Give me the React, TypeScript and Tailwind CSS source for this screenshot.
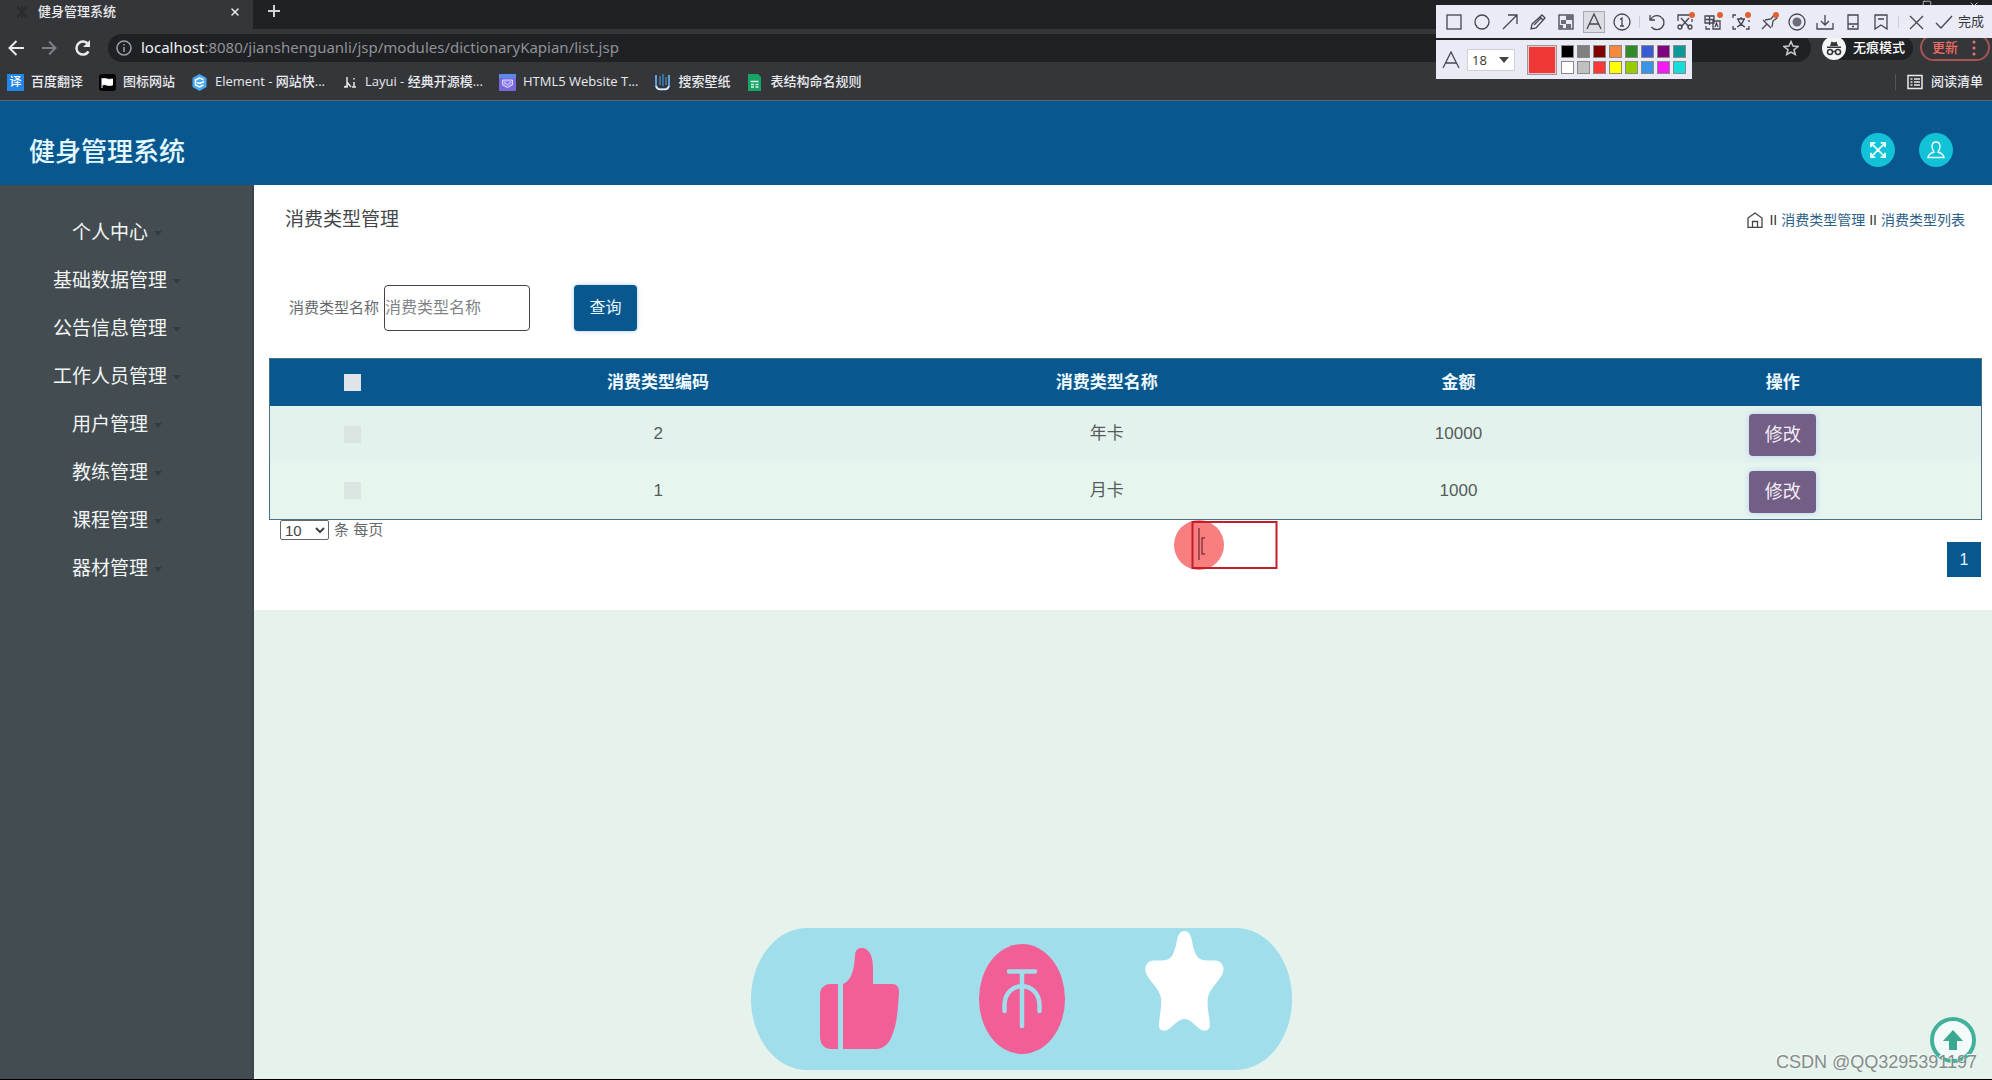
import type { ReactNode } from 'react'
import { Minus, Square, X } from 'lucide-react'

interface Bookmark {
  label: string
  icon: ReactNode
}

interface CardType {
  code: number
  name: string
  amount: number
}

const bookmarks: Bookmark[] = [
  {
    label: '百度翻译',
    icon: (
      <span className="flex h-[17px] w-[17px] items-center justify-center bg-[#2285e8] text-xs text-white">译</span>
    ),
  },
  {
    label: '图标网站',
    icon: (
      <svg viewBox="0 0 17 17" className="h-[17px] w-[17px]">
        <rect width="17" height="17" rx="3" fill="#050505" />
        <path d="M3 4v10M3.500 5c3-1.500 5 1.500 10 0v6c-5 1.500-7-1.500-10 0z" fill="#fff" stroke="#fff" />
      </svg>
    ),
  },
  {
    label: 'Element - 网站快...',
    icon: (
      <svg viewBox="0 0 17 17" className="h-[17px] w-[17px]">
        <path d="M8.500 0l7 4v9l-7 4-7-4V4z" fill="#45a9f5" />
        <path d="M12.500 5.500L8.500 4 4.500 6v5l4 2 4-2M6 8.500l3 1 4-2" fill="none" stroke="#fff" strokeWidth="1.500" />
      </svg>
    ),
  },
  {
    label: 'Layui - 经典开源模...',
    icon: (
      <svg viewBox="0 0 17 17" className="h-[17px] w-[17px]">
        <path d="M6 3v9l-3 1M6 8l4 5M3 13h4M13 4v1.500M13 8v5M11 13h4" fill="none" stroke="#e4e4e4" strokeWidth="1.500" />
      </svg>
    ),
  },
  {
    label: 'HTML5 Website T...',
    icon: (
      <svg viewBox="0 0 17 17" className="h-[17px] w-[17px]">
        <rect width="17" height="17" rx="1" fill="#7769dc" />
        <rect width="17" height="4" fill="#5b8ae8" />
        <path d="M3.500 6h10v5l-5 2.500-5-2.500zM5 8l3.500 2.500L12 8" fill="#9c8df0" stroke="#ddd8ff" />
      </svg>
    ),
  },
  {
    label: '搜索壁纸',
    icon: (
      <svg viewBox="0 0 17 17" className="h-[17px] w-[17px]">
        <path d="M2 1v10c0 3 2 4 4 4h5c3 0 4-2 4-4V1" fill="none" stroke="#5f9fd6" strokeWidth="2" />
        <path d="M6 2v9M9 0v12M12 3v8" stroke="#3f7fb8" strokeWidth="1.500" />
        <path d="M2 12c1 3 2 3.500 4 3.500h5c2 0 3-.5 4-3.500" fill="none" stroke="#e6f1fa" strokeWidth="1.500" />
      </svg>
    ),
  },
  {
    label: '表结构命名规则',
    icon: (
      <svg viewBox="0 0 17 17" className="h-[17px] w-[17px]">
        <path d="M2 0h10l3 3v14H2z" fill="#17a566" />
        <path d="M4.500 7.500h8M5 10.500h3M9.500 10.500h3M5 13h3M9.500 13h3" stroke="#d4f5e4" strokeWidth="1.300" />
      </svg>
    ),
  },
]

const menu = ['个人中心', '基础数据管理', '公告信息管理', '工作人员管理', '用户管理', '教练管理', '课程管理', '器材管理']

const rows: CardType[] = [
  { code: 2, name: '年卡', amount: 10000 },
  { code: 1, name: '月卡', amount: 1000 },
]

const palette = [
  'bg-black', 'bg-[#808080]', 'bg-[#800000]', 'bg-[#f7883a]', 'bg-[#308a27]', 'bg-[#385ad3]', 'bg-[#800080]', 'bg-[#0c9a99]',
  'bg-white', 'bg-[#c0c0c0]', 'bg-[#fb3838]', 'bg-[#ffff00]', 'bg-[#99cc00]', 'bg-[#3894e4]', 'bg-[#f31bf3]', 'bg-[#16dcdc]',
]

// drawing tools of the capture bar, 20x20 each
const dot = <circle cx="17" cy="3" r="3" fill="#e0602e" stroke="none" />

const drawTools: { name: string; art: ReactNode; active?: boolean }[] = [
  { name: '矩形', art: <rect x="3" y="3" width="14" height="14" /> },
  { name: '椭圆', art: <circle cx="10" cy="10" r="7" /> },
  { name: '箭头', art: <path d="M3 17L17 3M8 3h9v9" /> },
  { name: '画笔', art: <path d="M3 17l1-5L14 3l3 3-9 10zM12 5l3 3M6 13l7-7" /> },
  {
    name: '马赛克',
    art: (
      <>
        <rect x="3" y="3" width="14" height="14" />
        <path d="M10 3h7v5h-7zM5 8h5v4H5zM3 13h4v4H3zM10 12h5v5h-5z" fill="#6b6c76" stroke="none" />
      </>
    ),
  },
  { name: '文字', art: <path d="M3 17l7-15 7 15M5.500 12h9" />, active: true },
  { name: '序号', art: <><circle cx="10" cy="10" r="8" /><path d="M8 7.500l2-1.500v8M8 14h4" /></> },
]

const actionTools: { name: string; art: ReactNode }[] = [
  { name: '撤销', art: <path d="M3 3v5h5M3.500 8a7 7 0 1 1 1 7" /> },
  {
    name: '截图',
    art: (
      <>
        <path d="M3 9V3h12M17 7v3M6 6l8 9M14 6l-8 9" />
        <circle cx="5" cy="15" r="2" />
        <circle cx="15" cy="15" r="2" />
        {dot}
      </>
    ),
  },
  { name: '翻译', art: <><path d="M2 4h9v7H2zM6.500 4v9M2 7.500h9M10 9h7v8h-7zM12 15l1.500-4 1.500 4M3 14v3h4" />{dot}</> },
  { name: '识别', art: <><path d="M2 6V3h3M2 14v3h3M15 17h3v-3M18 8v2M6 7h8M10 5v2M13 7c-1 4-3 6-7 8M7 7c1 4 3 6 7 8" />{dot}</> },
  { name: '固定', art: <><path d="M3 17l5-5M4 8l8 8M6 8l6-1 3-4 3 3-4 3-1 6" />{dot}</> },
  { name: '录制', art: <><circle cx="10" cy="10" r="8" /><circle cx="10" cy="10" r="4.500" fill="#6b6c76" stroke="none" /></> },
  { name: '保存', art: <path d="M2 11v6h16v-6M10 3v10M6 9l4 4 4-4" /> },
  { name: '手机', art: <path d="M5 3h10v14H5zM5 12h10M9 14.500h2" /> },
  { name: '收藏', art: <path d="M4 3h12v14l-6-4-6 4zM7 7h6" /> },
]

function ToolButton({ name, art, active }: { name: string; art: ReactNode; active?: boolean }) {
  return (
    <button aria-label={name} className="flex h-full w-7 items-center justify-center">
      <span className={active ? 'border border-[#a8a8b2] bg-[#dcdce4]' : 'border border-transparent'}>
        <svg viewBox="0 0 20 20" className="h-5 w-5" fill="none" stroke="#45464f" strokeWidth="1.300">
          {art}
        </svg>
      </span>
    </button>
  )
}

function CaptureToolbar() {
  return (
    <div className="absolute right-0 top-[5px] flex flex-col items-start gap-[2px]">
      <div className="flex h-[33px] w-[556px] items-center bg-[#ebebf5] pl-1">
        {drawTools.map(tool => (
          <ToolButton key={tool.name} {...tool} />
        ))}
        <span className="mx-[3px] h-3 w-px bg-[#ccccd4]" />
        {actionTools.map(tool => (
          <ToolButton key={tool.name} {...tool} />
        ))}
        <span className="mx-[3px] h-3 w-px bg-[#ccccd4]" />
        <ToolButton name="关闭" art={<path d="M4 4l13 13M17 4L4 17" />} />
        <button className="flex items-center gap-1 pl-1 text-[13px] text-[#33343b]">
          <svg viewBox="0 0 20 20" className="h-5 w-5" fill="none" stroke="#45464f" strokeWidth="1.300">
            <path d="M2 11l5 5L18 4" />
          </svg>
          完成
        </button>
      </div>
      <div className="flex h-[39px] w-[256px] items-center bg-[#ebebf5] pl-[6px]">
        <svg viewBox="0 0 18 18" className="h-[18px] w-[18px]" fill="none" stroke="#45464f" strokeWidth="1.300">
          <path d="M1 17L9 1l8 16M4 12h10" />
        </svg>
        <div className="relative ml-[7px] flex">
          <select
            aria-label="字号"
            className="h-[22px] w-12 appearance-none border border-[#d0d0d8] bg-white pl-1 font-['Open_Sans'] text-[13px] leading-5 text-[#333]"
          >
            <option>18</option>
          </select>
          <svg viewBox="0 0 10 6" className="pointer-events-none absolute right-1.5 top-2 h-[6px] w-[10px]">
            <path d="M0 0h10L5 6z" fill="#444" />
          </svg>
        </div>
        <span className="ml-3 h-[30px] w-[30px] border border-[#999] bg-[#f03737] outline outline-1 -outline-offset-2 outline-[#f2c8c8]" />
        <div className="ml-[4px] grid grid-cols-8 gap-[3px]">
          {palette.map(color => (
            <button key={color} aria-label="颜色" className={`h-[13px] w-[13px] border border-[#8a8a8a] ${color}`} />
          ))}
        </div>
      </div>
    </div>
  )
}

function BrowserChrome() {
  return (
    <div className="relative bg-[#35363a] font-['Noto_Sans','Noto_Sans_CJK_SC',sans-serif] text-[#e8eaed]">
      <div className="flex h-[29px] items-start bg-[#202124]">
        <div className="flex h-full w-[253px] items-center bg-[#35363a] pb-1.5 pl-[15px] pr-3">
          <svg viewBox="0 0 14 14" className="h-[14px] w-[14px]" fill="none" stroke="#292a2e" strokeWidth="2">
            <path d="M2 2l10 10M12 2L2 12M7 1v12" />
          </svg>
          <span className="ml-[9px] flex-1 text-[13px] font-medium">健身管理系统</span>
          <X className="h-3 w-3" strokeWidth={3} />
        </div>
        <button aria-label="新标签页" className="ml-3.5 mt-[4px]">
          <svg viewBox="0 0 14 14" className="h-[14px] w-[14px]" stroke="#d0d2d5" strokeWidth="2">
            <path d="M7 1v12M1 7h12" />
          </svg>
        </button>
        <div className="ml-auto flex gap-9 pr-3 text-[#c8c9cc]">
          <Minus className="h-3 w-3" />
          <Square className="h-2.5 w-2.5" />
          <X className="h-3 w-3" />
        </div>
      </div>

      <div className="flex h-[37px] items-center pl-2">
        <svg viewBox="0 0 18 18" className="h-[18px] w-[18px]" fill="none" stroke="#e8eaed" strokeWidth="2">
          <path d="M16 9H2M8.500 2L1.500 9l7 7" />
        </svg>
        <svg viewBox="0 0 18 18" className="ml-[15px] h-[18px] w-[18px]" fill="none" stroke="#7d7f83" strokeWidth="2">
          <path d="M1 9h13M8 2.500L14.500 9 8 15.500" />
        </svg>
        <svg viewBox="0 0 18 18" className="ml-[15px] h-[18px] w-[18px]" fill="none" stroke="#e8eaed" strokeWidth="2.500">
          <path d="M14.500 12.500A6.500 6.500 0 1 1 14 5" />
          <path d="M16 1v7H9z" fill="#e8eaed" stroke="none" />
        </svg>
        <div className="ml-4 flex h-7 flex-1 items-center rounded-full bg-[#202124] pl-2 pr-3">
          <svg viewBox="0 0 16 16" className="h-4 w-4" fill="none" stroke="#9aa0a6" strokeWidth="1.500">
            <circle cx="8" cy="8" r="7" />
            <path d="M8 7v5M8 4v1.500" />
          </svg>
          <span className="ml-[9px] flex-1 text-[15px] text-[#8f9296]">
            <span className="text-[#f1f3f4]">localhost</span>:8080/jianshenguanli/jsp/modules/dictionaryKapian/list.jsp
          </span>
          <svg viewBox="0 0 16 16" className="h-4 w-4" fill="none" stroke="#c8cacd" strokeWidth="1.500">
            <path d="M8 1.500l2 4.500 5 .5-4 3.200 1.300 4.800L8 12l-4.300 2.500L5 9.700 1 6.500 6 6z" />
          </svg>
        </div>
        <div className="ml-[11px] flex h-6 items-center gap-[7px] rounded-full bg-[#202124] pr-2 text-[13px] font-medium text-white">
          <svg viewBox="0 0 24 24" className="h-6 w-6">
            <circle cx="12" cy="12" r="12" fill="#f4f5f6" />
            <path d="M5 10.500h14v1.500H5zM8 10l1.500-4.500 2.500 1 2.500-1L16 10z" fill="#35363a" />
            <g fill="none" stroke="#35363a" strokeWidth="1.500">
              <circle cx="8" cy="16" r="2.500" />
              <circle cx="16" cy="16" r="2.500" />
              <path d="M10.500 15.500h3" />
            </g>
          </svg>
          无痕模式
        </div>
        <button className="ml-[7px] mr-[2px] flex h-[27px] w-[70px] items-center justify-between rounded-full border-2 border-[#a5544f] pl-2.5 pr-3 text-[13px] font-medium text-[#ef6d65]">
          更新
          <svg viewBox="0 0 4 16" className="h-4 w-1" fill="#e5766f">
            <circle cx="2" cy="2" r="1.500" />
            <circle cx="2" cy="8" r="1.500" />
            <circle cx="2" cy="14" r="1.500" />
          </svg>
        </button>
      </div>

      <div className="flex h-[35px] items-center border-b border-[#5a6670] pb-0.5 pl-[7px] pr-[9px] text-[13px] font-medium">
        <nav className="flex flex-1 gap-4">
          {bookmarks.map(bookmark => (
            <a key={bookmark.label} href="#" className="flex items-center gap-[7px] whitespace-nowrap">
              {bookmark.icon}
              <span className="font-['Open_Sans','Noto_Sans_CJK_SC',sans-serif]">{bookmark.label}</span>
            </a>
          ))}
        </nav>
        <span className="mr-[11px] h-4 w-px bg-[#54565a]" />
        <a href="#" className="flex items-center gap-2">
          <svg viewBox="0 0 16 16" className="h-4 w-4" fill="none" stroke="#e8eaed" strokeWidth="1.500">
            <path d="M1 1.500h14v13H1zM3.500 5h2M7 5h6M3.500 8h2M7 8h6M3.500 11h2M7 11h6" />
          </svg>
          阅读清单
        </a>
      </div>

      <CaptureToolbar />
    </div>
  )
}

function Header() {
  return (
    <header className="flex h-[84px] items-center bg-[#08588f] pl-[29px] pr-[39px]">
      <h1 className="flex-1 pt-[18px] text-[26px] font-medium text-[#e4f8ff]">健身管理系统</h1>
      <div className="flex gap-6 pt-3.5">
        <button aria-label="全屏" className="flex h-[34px] w-[34px] items-center justify-center rounded-full bg-[#12c2d6]">
          <svg viewBox="0 0 18 18" className="h-4 w-4" fill="none" stroke="#e9fcff" strokeWidth="2">
            <path d="M2 2l14 14M16 2L2 16M1 6V1h5M12 1h5v5M17 12v5h-5M6 17H1v-5" />
          </svg>
        </button>
        <button aria-label="个人信息" className="flex h-[34px] w-[34px] items-center justify-center rounded-full bg-[#12c2d6]">
          <svg viewBox="0 0 18 18" className="h-[18px] w-[18px]" fill="none" stroke="#e9fcff" strokeWidth="1.500">
            <path d="M9 1C6 1 5 3 5 5.500S6.500 10 7 11c-3 1-5.500 2-6 5.500h16c-.5-3.500-3-4.500-6-5.500.5-1 2-3 2-5.500S12 1 9 1z" />
          </svg>
        </button>
      </div>
    </header>
  )
}

function Sidebar() {
  return (
    <aside className="w-[254px] shrink-0 border-r-2 border-[#3c4549] bg-[#434c50] pr-[18px] pt-6">
      <ul>
        {menu.map(item => (
          <li key={item}>
            <a href="#" className="flex h-12 items-center justify-center gap-1.5 text-[19px] text-[#f2f5f5]">
              {item}
              <svg viewBox="0 0 8 5" className="h-[5px] w-2">
                <path d="M0 0h8L4 5z" fill="#333b3e" />
              </svg>
            </a>
          </li>
        ))}
      </ul>
    </aside>
  )
}

function DataTable() {
  return (
    <table className="w-full table-fixed border border-[#4a7088] text-center text-[17px] text-[#555c5c]">
      <colgroup>
        <col className="w-[9.7%]" />
        <col className="w-[26%]" />
        <col className="w-[26.4%]" />
        <col className="w-[14.7%]" />
        <col className="w-[23.2%]" />
      </colgroup>
      <thead className="bg-[#08588f] text-[#f0faff]">
        <tr className="h-[47px]">
          <th>
            <input type="checkbox" aria-label="全选" className="mx-auto block h-[17px] w-[17px] appearance-none bg-[#dfe4ea]" />
          </th>
          <th>消费类型编码</th>
          <th>消费类型名称</th>
          <th>金额</th>
          <th>操作</th>
        </tr>
      </thead>
      <tbody>
        {rows.map(row => (
          <tr key={row.code} className="h-[57px] odd:bg-[#e4f2ed] even:bg-[#e6f6ee]">
            <td>
              <input type="checkbox" aria-label={row.name} className="mx-auto block h-[17px] w-[17px] appearance-none bg-[#dae4e1]" />
            </td>
            <td>{row.code}</td>
            <td>{row.name}</td>
            <td>{row.amount}</td>
            <td className="pt-0.5">
              <button className="h-[42px] w-[67px] rounded-sm bg-[#735f85] text-lg text-[#f3edf7] shadow-[0_0_6px_#b8d0f0]">
                修改
              </button>
            </td>
          </tr>
        ))}
      </tbody>
    </table>
  )
}

function TripleBadge() {
  return (
    <svg viewBox="0 0 541 142" className="absolute bottom-[9px] left-1/2 -ml-[245px] h-[142px] w-[541px]">
      <path d="M56 0H485C516 0 541 32 541 71S516 142 485 142H56C25 142 0 110 0 71S25 0 56 0z" fill="#a0deec" />
      <g fill="#f25f96">
        <path d="M87 56H80C73 56 69 60 69 67V108C69 116 73 121 80 121H87z" />
        <path d="M92 56C99 53 103 45 104 28C104 22 107 20 111 20C118 20 122 28 122 40V56H141C146 56 148 59 148 64C147 80 146 95 142 105C139 115 133 121 125 121H92z" />
        <ellipse cx="271" cy="71" rx="43" ry="55" />
      </g>
      <path
        d="M258 43.500H284M271 43.500V98M253.500 83V77C254 52 288 52 288.500 77V83"
        fill="none"
        stroke="#a0deec"
        strokeWidth="4.500"
        strokeLinecap="round"
      />
      <path
        d="M433.400 3C429 3 427 7 426 12C424 24 421 31 415 32C408 33 404 32 400 33C394 35 393 42 396 47C400 55 408 60 410 70C411 80 408 90 408 97C408 103 413 104 418 101C423 97 428 91 433.400 91C438.800 91 443.800 97 448.800 101C453.800 104 458.800 103 458.800 97C458.800 90 455.800 80 456.800 70C458.800 60 466.800 55 470.800 47C473.800 42 472.800 35 466.800 33C462.800 32 458.800 33 451.800 32C445.800 31 442.800 24 440.800 12C439.800 7 437.800 3 433.400 3z"
        fill="#fff"
      />
    </svg>
  )
}

export default function App() {
  return (
    <div className="relative flex min-h-screen flex-col overflow-hidden border-b border-black bg-[#e6f2ec] font-['Liberation_Sans','Noto_Sans_CJK_SC',sans-serif]">
      <BrowserChrome />
      <Header />
      <div className="flex flex-1">
        <Sidebar />
        <main className="min-w-0 flex-1">
          <section className="bg-white pb-[33px] pl-[15px] pr-[10px] pt-[21px]">
            <div className="flex items-center justify-between pl-4 pr-[17px]">
              <h2 className="text-[19px] leading-7 text-[#44474a]">消费类型管理</h2>
              <nav className="flex items-center gap-1 text-sm text-[#333]">
                <a href="#" aria-label="首页" className="mr-0.5">
                  <svg viewBox="0 0 16 16" className="h-4 w-4" fill="none" stroke="#444" strokeWidth="1.300">
                    <path d="M1 6l7-5 7 5v9.300H1zM5.500 15v-5.500h5V15" />
                  </svg>
                </a>
                <span>II</span>
                <a href="#" className="text-[#2d6089]">消费类型管理</a>
                <span>II</span>
                <a href="#" className="text-[#2d6089]">消费类型列表</a>
              </nav>
            </div>

            <form className="mt-[51px] flex items-center pl-5">
              <label htmlFor="cardName" className="text-[15px] text-[#66696c]">消费类型名称</label>
              <input
                id="cardName"
                placeholder="消费类型名称"
                className="ml-[5px] h-[46px] w-[146px] rounded-sm border border-[#444] text-base placeholder:text-[#808386]"
              />
              <button
                type="button"
                className="ml-11 h-[46px] w-[63px] rounded-sm bg-[#08588f] text-base text-[#e8f6ff] shadow-[0_0_4px_#a8c8f0]"
              >
                查询
              </button>
            </form>

            <div className="mt-[27px]">
              <DataTable />
            </div>

            <div className="relative flex justify-between">
              <label className="flex h-5 items-center gap-[5px] pl-[11px] text-[15px] text-[#66696c]">
                <select className="h-5 w-[49px] rounded-xs border border-[#666] bg-white text-[15px] leading-4 text-[#444]">
                  <option>10</option>
                </select>
                条 每页
              </label>
              <button className="mr-px mt-[22px] h-[35px] w-[34px] bg-[#08588f] text-base text-[#e8f6ff]">1</button>

              {/* click highlight and selection frame */}
              <svg viewBox="0 0 104 50" className="absolute left-[905px] top-0 h-[50px] w-[104px]">
                <circle cx="25" cy="25" r="25" fill="#f77f80" />
                <rect x="18.500" y="2" width="84" height="46" fill="none" stroke="#c21f2a" strokeWidth="2" />
                <path d="M25 8v32M31 18h-3v16h3" fill="none" stroke="#8c3a42" strokeWidth="1.500" />
              </svg>
            </div>
          </section>
        </main>
      </div>

      <TripleBadge />

      <a href="#" aria-label="返回顶部" className="absolute bottom-4 right-4">
        <svg viewBox="0 0 46 46" className="h-[46px] w-[46px]">
          <circle cx="23" cy="23" r="21" fill="#f2fbf9" stroke="#43b09a" strokeWidth="4" />
          <path d="M23 13l10 11h-6v9h-8v-9h-6z" fill="#3aa98f" />
        </svg>
      </a>
      <p className="absolute bottom-[3px] right-[15px] text-lg text-[#868c8a] [text-shadow:-1px_-1px_0_#f4faf7]">
        CSDN @QQ3295391197
      </p>
    </div>
  )
}
